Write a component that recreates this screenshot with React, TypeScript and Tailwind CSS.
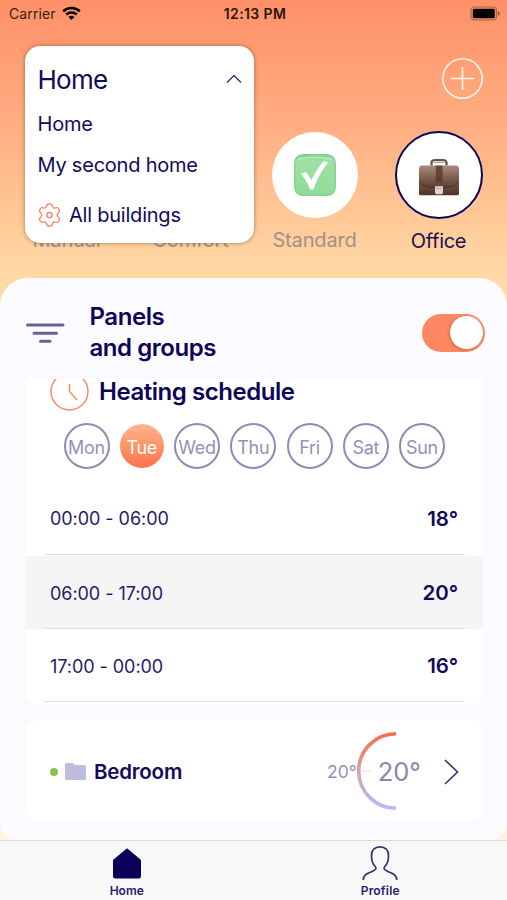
import React, { useState } from "react";

const SCHEDULE = [
  { time: "00:00 - 06:00", temp: "18°" },
  { time: "06:00 - 17:00", temp: "20°", current: true },
  { time: "17:00 - 00:00", temp: "16°" },
];

const DAYS = ["Mon", "Tue", "Wed", "Thu", "Fri", "Sat", "Sun"];

function StatusBar() {
  return (
    <header className="flex h-[27px] shrink-0 items-center pr-[6px] pl-[9px] text-black">
      <div className="flex flex-1 items-center gap-[6px]">
        <span className="text-[14px] tracking-[0.1px] opacity-80">Carrier</span>
        <svg width="19" height="15" viewBox="0 0 19 15" fill="none" stroke="currentColor" strokeWidth="2.5">
          <path d="M1.2 5.3C5.8 .8 13.2 .8 17.8 5.3" />
          <path d="M4.2 8.5C7.2 5.7 11.8 5.7 14.8 8.5" />
          <path d="M6.5 10.9C8.2 9.2 10.8 9.2 12.5 10.9L9.5 14z" fill="currentColor" stroke="none" />
        </svg>
      </div>
      <span className="text-[14px] font-semibold tracking-[0.4px] opacity-85">12:13 PM</span>
      <div className="flex flex-1 justify-end">
        <svg width="31" height="15" viewBox="0 0 31 15">
          <rect x="1" y="1" width="25.5" height="13" rx="3.5" fill="none" stroke="#5c2e20" strokeOpacity=".5" strokeWidth="1.2" />
          <rect x="2.800" y="2.800" width="22" height="9.400" rx="1.500" />
          <path d="M28 5.200C30.300 6 30.300 9 28 9.800z" opacity=".45" />
        </svg>
      </div>
    </header>
  );
}

function BuildingMenu() {
  return (
    <div className="absolute top-[46px] left-[25px] flex h-[197px] w-[229px] flex-col rounded-[15px] bg-white pr-[12px] pl-[12.5px] text-[#110b5c] shadow-[0_0_4px_rgba(90,50,30,0.55)]">
      <div className="flex h-[66px] items-center justify-between">
        <span className="text-[26px] tracking-[-0.7px]">Home</span>
        <svg width="16" height="10" viewBox="0 0 16 10" fill="none" stroke="#35306f" strokeWidth="1.4">
          <path d="M1 8.5L8 1.5L15 8.5" />
        </svg>
      </div>
      <span className="flex h-[24px] items-center text-[20px] tracking-[-0.2px]">Home</span>
      <span className="mt-[17px] flex h-[24px] items-center text-[20px] tracking-[-0.22px]">My second home</span>
      <span className="mt-[26px] flex h-[24px] items-center text-[20px] tracking-[-0.22px]">
        <svg className="mr-[8.5px]" width="23" height="24" viewBox="0 0 23 24" fill="none" stroke="#f5825f" strokeWidth="1.3">
          <path d="M8.3 3.7C8.7 1.6 9.8.8 11.5.8s2.8.8 3.2 2.9c.3 1 1.2 1.5 2.2 1.3 2-.7 3.300-.2 4.100 1.200.8 1.400.600 2.700-1 4.200-.8.800-.8 2.400 0 3.200 1.600 1.500 1.800 2.800 1 4.200-.8 1.400-2.100 1.900-4.100 1.200-1-.2-1.900.3-2.200 1.300-.4 2.100-1.500 2.900-3.200 2.900s-2.800-.8-3.200-2.900c-.3-1-1.200-1.500-2.200-1.300-2 .7-3.300.2-4.100-1.200-.8-1.400-.6-2.700 1-4.200.8-.8.8-2.400 0-3.200-1.600-1.500-1.800-2.800-1-4.200.8-1.400 2.100-1.900 4.100-1.200 1 .2 1.900-.3 2.200-1.300z" />
          <circle cx="11.500" cy="12" r="2.600" />
        </svg>
        All buildings
      </span>
    </div>
  );
}

function CheckEmoji() {
  return (
    <svg width="42" height="42" viewBox="0 0 42 42">
      <defs>
        <linearGradient id="check" x1="0" y1="0" x2="0" y2="1">
          <stop offset="0" stopColor="#86d391" />
          <stop offset=".15" stopColor="#9fe0a3" />
          <stop offset="1" stopColor="#8edc99" />
        </linearGradient>
      </defs>
      <rect x=".7" y=".7" width="40.600" height="40.600" rx="8" fill="url(#check)" stroke="#82cd91" strokeWidth="1.2" />
      <path d="M4 5.500Q21 1 38 5.500" fill="none" stroke="#b4ebb7" strokeWidth="1.300" />
      <path d="M7 20L11.500 17.800C14 20.500 16 23.500 17.400 26.500C21 18.500 25 12 29.500 7.200L34.300 8.500C27.500 16.500 22.800 25 19.500 35.500H16C14 30 11.500 25 7 20z" fill="#fff" />
    </svg>
  );
}

function BriefcaseEmoji() {
  return (
    <svg className="mt-[3px]" width="42" height="38" viewBox="0 0 42 38">
      <defs>
        <linearGradient id="leather" x1="0" y1="0" x2="0" y2="1">
          <stop offset="0" stopColor="#a58775" />
          <stop offset=".4" stopColor="#795a4a" />
          <stop offset="1" stopColor="#4f3328" />
        </linearGradient>
        <linearGradient id="flap" x1="0" y1="0" x2="0" y2="1">
          <stop offset="0" stopColor="#a88b78" />
          <stop offset="1" stopColor="#5c3d30" />
        </linearGradient>
      </defs>
      <path d="M13.500 7.500V4.500Q14 2.200 17 2.200H25Q28 2.200 28.500 4.500V7.500" fill="none" stroke="#6c5348" strokeWidth="2.300" />
      <path d="M16 4.600H26" stroke="#a89890" strokeWidth="1" />
      <rect x="1" y="13" width="40" height="24.300" rx="1.500" fill="url(#leather)" />
      <path d="M4 7.500H38Q41 7.500 41 11V24Q36 29.500 29 29.500H13Q6 29.500 1 24V11Q1 7.500 4 7.500z" fill="url(#flap)" />
      <path d="M1 24Q6 29.500 13 29.500H29Q36 29.500 41 24" fill="none" stroke="#472c23" strokeWidth=".8" />
      <rect x="17.800" y="7.500" width="6.700" height="17" fill="#573a2e" opacity=".8" />
      <path d="M17 28.300H25V34.500L24 36.300H18L17 34.500z" fill="#ddd6cf" />
      <path d="M18 30.500H24" stroke="#b3a9a1" strokeWidth="1" />
    </svg>
  );
}

function Mode({ label, active, children }: { label: string; active?: boolean; children?: React.ReactNode }) {
  return (
    <div className="flex w-[124px] shrink-0 flex-col items-center">
      <div
        className={
          active
            ? "flex size-[88px] items-center justify-center rounded-full border-[2.500px] border-[#0c0558] bg-white"
            : "my-[1px] flex size-[86px] items-center justify-center rounded-full bg-white"
        }
      >
        {children}
      </div>
      <span
        className={
          active
            ? "mt-[10px] text-[20px] leading-[24px] tracking-[-0.3px] text-[#20124e]"
            : "mt-[9px] text-[20px] leading-[24px] tracking-[-0.15px] text-[#a0918a]"
        }
      >
        {label}
      </span>
    </div>
  );
}

function DayPicker() {
  const [selected, setSelected] = useState("Tue");

  return (
    <div className="mt-[12px] flex justify-between pr-[38px] pl-[37.5px]">
      {DAYS.map((day) => (
        <button
          key={day}
          type="button"
          onClick={() => setSelected(day)}
          className={
            day === selected
              ? "my-[1px] flex size-[44px] items-center justify-center rounded-full bg-linear-to-b from-[#ffb58b] to-[#fb7146] pt-[2px] text-[18px] tracking-[-0.3px] text-white"
              : "flex size-[46px] items-center justify-center rounded-full border-2 border-[#908ab6] pt-[2px] text-[18px] tracking-[-0.3px] text-[#9690b8]"
          }
        >
          {day}
        </button>
      ))}
    </div>
  );
}

function ScheduleCard() {
  return (
    <section className="mr-[24px] ml-[26px] h-[325px] rounded-b-[12px] bg-white">
      <div className="flex h-[32px] pl-[24px]">
        <svg width="40" height="32" viewBox="0 8 40 32" fill="none" stroke="#f58d6b" strokeWidth="1.500">
          <circle cx="19.500" cy="20.500" r="18.500" />
          <path d="M19.500 13V20.500L27 29" />
        </svg>
        <h2 className="ml-[9px] text-[24px] leading-[26px] font-semibold tracking-[-0.45px] whitespace-nowrap text-[#0c0558]">
          Heating schedule
        </h2>
      </div>
      <DayPicker />
      <div className="mt-[14px]">
        {SCHEDULE.map((row) => (
          <div key={row.time} className={row.current ? "h-[73px] bg-[#f5f5f5] pr-[18px] pl-[19px]" : "h-[73px] pr-[18px] pl-[19px]"}>
            <div
              className={
                row.time.startsWith("00")
                  ? "flex h-[72px] items-center justify-between border-b border-[#dedee1] pr-[7px] pl-[5px] text-[#251a68]"
                  : "flex h-[73px] items-center justify-between border-b border-[#dedee1] pr-[7px] pl-[5px] pt-[2px] text-[#251a68]"
              }
            >
              <span className="text-[18px] tracking-[-0.05px]">{row.time}</span>
              <span className="mt-[1px] text-[20.500px] font-semibold tracking-[-0.1px] text-[#110b5c]">{row.temp}</span>
            </div>
          </div>
        ))}
      </div>
    </section>
  );
}

function RoomCard() {
  return (
    <section className="mt-[16px] mr-[24px] ml-[26px] flex h-[100px] items-center rounded-[12px] bg-white pr-[24px] pl-[24px]">
      <span className="mt-[3px] size-[8px] rounded-full bg-[#8cc152]" />
      <svg className="mt-[3px] ml-[7px]" width="21" height="17" viewBox="0 0 21 17" fill="#bfbce0">
        <path d="M1.500 0H8L10 2H19.500Q21 2 21 3.500V15.500Q21 17 19.500 17H1.500Q0 17 0 15.500V1.500Q0 0 1.500 0z" />
      </svg>
      <h3 className="mt-[4px] ml-[8px] flex-1 text-[20.500px] font-semibold tracking-[-0.2px] text-[#110b5c]">Bedroom</h3>
      <span className="mt-[4px] text-[17.500px] text-[#9690b8]">20°</span>
      <svg className="mt-[2px] overflow-visible" width="40" height="80" viewBox="0 0 40 80" fill="none">
        <defs>
          <linearGradient id="dial" gradientUnits="userSpaceOnUse" x1="0" y1="0" x2="0" y2="80">
            <stop offset="0" stopColor="#ef6d4c" />
            <stop offset=".25" stopColor="#ef8468" />
            <stop offset=".6" stopColor="#cda9bd" />
            <stop offset="1" stopColor="#b2bdf8" />
          </linearGradient>
        </defs>
        <path d="M39 2.700A37.300 37.300 0 0 0 39 77.300" stroke="url(#dial)" strokeWidth="3.600" />
        <path d="M3 40H14" stroke="#e5dce5" strokeWidth="1" />
      </svg>
      <span className="mt-[4px] ml-[-19px] text-[25.500px] text-[#8c86b5]">20°</span>
      <svg className="mt-[3px] ml-[23px]" width="15" height="26" viewBox="0 0 15 26" fill="none" stroke="#35306f" strokeWidth="1.600">
        <path d="M1 1L13.500 13L1 25" />
      </svg>
    </section>
  );
}

function TabBar() {
  return (
    <nav className="flex h-[60px] shrink-0 border-t border-[#dcdcdc] bg-[#f8f8f8] text-[12px] font-semibold text-[#28206c]">
      <button type="button" className="flex w-1/2 flex-col items-center pt-[7px]">
        <svg width="28" height="31" viewBox="0 0 28 31" fill="#0a0058">
          <path d="M14 .3L27.500 11.500Q28 12 28 13V28Q28 30.500 25.500 30.500H2.500Q0 30.500 0 28V13Q0 12 .5 11.500z" />
        </svg>
        <span className="mt-[4px] leading-[15px]">Home</span>
      </button>
      <button type="button" className="flex w-1/2 flex-col items-center pt-[4px]">
        <svg width="36" height="36" viewBox="0 0 36 36" fill="none" stroke="#35306f" strokeWidth="1.700" strokeLinejoin="round">
          <path d="M1.200 35C1.700 28.500 6.500 28.500 11 26C14.500 24 14.700 23.500 13 21.200C10.500 19 9.500 15.500 9.500 10.500C9.500 5 12.500 1.800 18 1.800S26.500 5 26.500 10.500C26.500 15.500 25.500 19 23 21.200C21.300 23.500 21.500 24 25 26C29.500 28.500 34.300 28.500 34.800 35" />
        </svg>
        <span className="mt-[2px] leading-[15px] tracking-[0.2px]">Profile</span>
      </button>
    </nav>
  );
}

export default function App() {
  const [enabled, setEnabled] = useState(true);

  return (
    <div className="relative flex h-[900px] w-[507px] flex-col overflow-hidden bg-[linear-gradient(to_bottom,#ff9068_0px,#ffae82_125px,#ffd9a4_275px,#fff3df_840px)] font-['Inter',sans-serif]">
      <StatusBar />
      <div className="flex h-[104px] shrink-0 items-center justify-end pr-[24px]">
        <button type="button" aria-label="Add" className="mb-[1px]">
          <svg width="41" height="41" viewBox="0 0 41 41" fill="none" stroke="#fff4ec" strokeWidth="1.600">
            <circle cx="20.500" cy="20.500" r="19.700" />
            <path d="M20.500 9V32M9 20.500H32" />
          </svg>
        </button>
      </div>
      <div className="ml-[26px] flex h-[147px] shrink-0 justify-end overflow-hidden pr-[6.500px]">
        <Mode label="Manual" />
        <Mode label="Comfort" />
        <Mode label="Standard"><CheckEmoji /></Mode>
        <Mode label="Office" active><BriefcaseEmoji /></Mode>
      </div>
      <main className="flex h-[562px] shrink-0 flex-col overflow-hidden rounded-t-[28px] rounded-b-[18px] bg-[#fbfaff]">
        <div className="flex h-[101px] shrink-0 items-center pt-[8px] pr-[22px] pl-[26px]">
          <svg width="39" height="20" viewBox="0 0 39 20" fill="none" stroke="#67619a" strokeWidth="3" strokeLinecap="round">
            <path d="M1.500 2H37M8 10.200H30.500M14.500 18.300H24" />
          </svg>
          <h1 className="ml-[24.500px] flex-1 text-[24px] leading-[30.500px] font-semibold tracking-[-0.45px] text-[#0c0558]">
            Panels
            <br />
            and groups
          </h1>
          <button
            type="button"
            role="switch"
            aria-checked={enabled}
            onClick={() => setEnabled(!enabled)}
            className={
              enabled
                ? "flex h-[38px] w-[63px] items-center justify-end rounded-full bg-[#ff8763] px-[2.500px]"
                : "flex h-[38px] w-[63px] items-center rounded-full bg-gray-300 px-[2.500px]"
            }
          >
            <span className="size-[33px] rounded-full bg-white shadow-[-1px_1px_3px_rgba(130,50,20,0.35)]" />
          </button>
        </div>
        <ScheduleCard />
        <RoomCard />
      </main>
      <TabBar />
      <BuildingMenu />
    </div>
  );
}
